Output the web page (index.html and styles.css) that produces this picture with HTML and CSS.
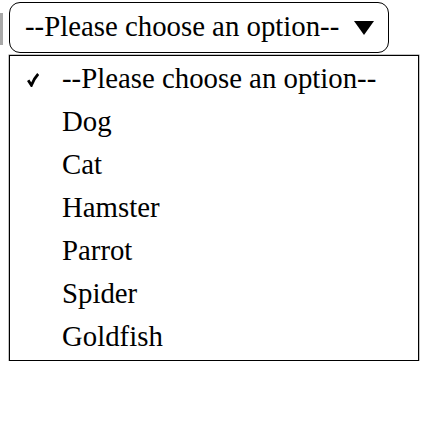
FILE: index.html
```html
<!DOCTYPE html>
<html>
<head>
<meta charset="utf-8">
<link rel="stylesheet" href="styles.css">
</head>
<body>
<div class="page">
  <div class="top">
    <div class="edge"></div>
    <div class="select">
      <span class="value">--Please choose an option--</span>
      <svg class="arrow" width="20" height="14" viewBox="0 0 20 14"><polygon points="0,0 20,0 10,14" fill="#000"/></svg>
    </div>
  </div>
  <ul class="list">
    <li class="item selected"><span class="check"><svg width="12" height="14" viewBox="0 0 12 14"><path d="M1.2 7.2 L4.4 12.2 Q7 5.5 11.2 1" fill="none" stroke="#000" stroke-width="2.8" stroke-linejoin="miter"/></svg></span><span>--Please choose an option--</span></li>
    <li class="item"><span class="check"></span><span>Dog</span></li>
    <li class="item"><span class="check"></span><span>Cat</span></li>
    <li class="item"><span class="check"></span><span>Hamster</span></li>
    <li class="item"><span class="check"></span><span>Parrot</span></li>
    <li class="item"><span class="check"></span><span>Spider</span></li>
    <li class="item"><span class="check"></span><span>Goldfish</span></li>
  </ul>
</div>
</body>
</html>
```
FILE: styles.css
```css
html, body {
  margin: 0;
  padding: 0;
  background: #fff;
}
.page {
  font-family: "Liberation Serif", "Times New Roman", serif;
  color: #000;
  font-size: 28.8px;
  padding-top: 2px;
}
.top {
  display: flex;
  align-items: flex-start;
}
.edge {
  width: 3px;
  height: 32px;
  margin-top: 11px;
  background: #a8a8a8;
  margin-right: 6px;
}
.select {
  box-sizing: border-box;
  width: 380px;
  height: 51px;
  border: 1.5px solid #000;
  border-radius: 11px;
  display: flex;
  align-items: center;
  padding: 0 14px 2px 15px;
  justify-content: space-between;
}
.arrow {
  display: block;
  margin-top: 3px;
}
.list {
  list-style: none;
  margin: 2px 0 0 9px;
  padding: 1px 0 2px 0;
  width: 410px;
  box-sizing: border-box;
  border: 1.5px solid #000;
  box-shadow: 0 0 0 0.5px #888;
}
.item {
  display: flex;
  align-items: center;
  height: 43px;
}
.check {
  width: 52px;
  padding-left: 17px;
  box-sizing: border-box;
  display: flex;
  align-items: center;
}
.check svg {
  display: block;
  margin-top: 2px;
}
```
